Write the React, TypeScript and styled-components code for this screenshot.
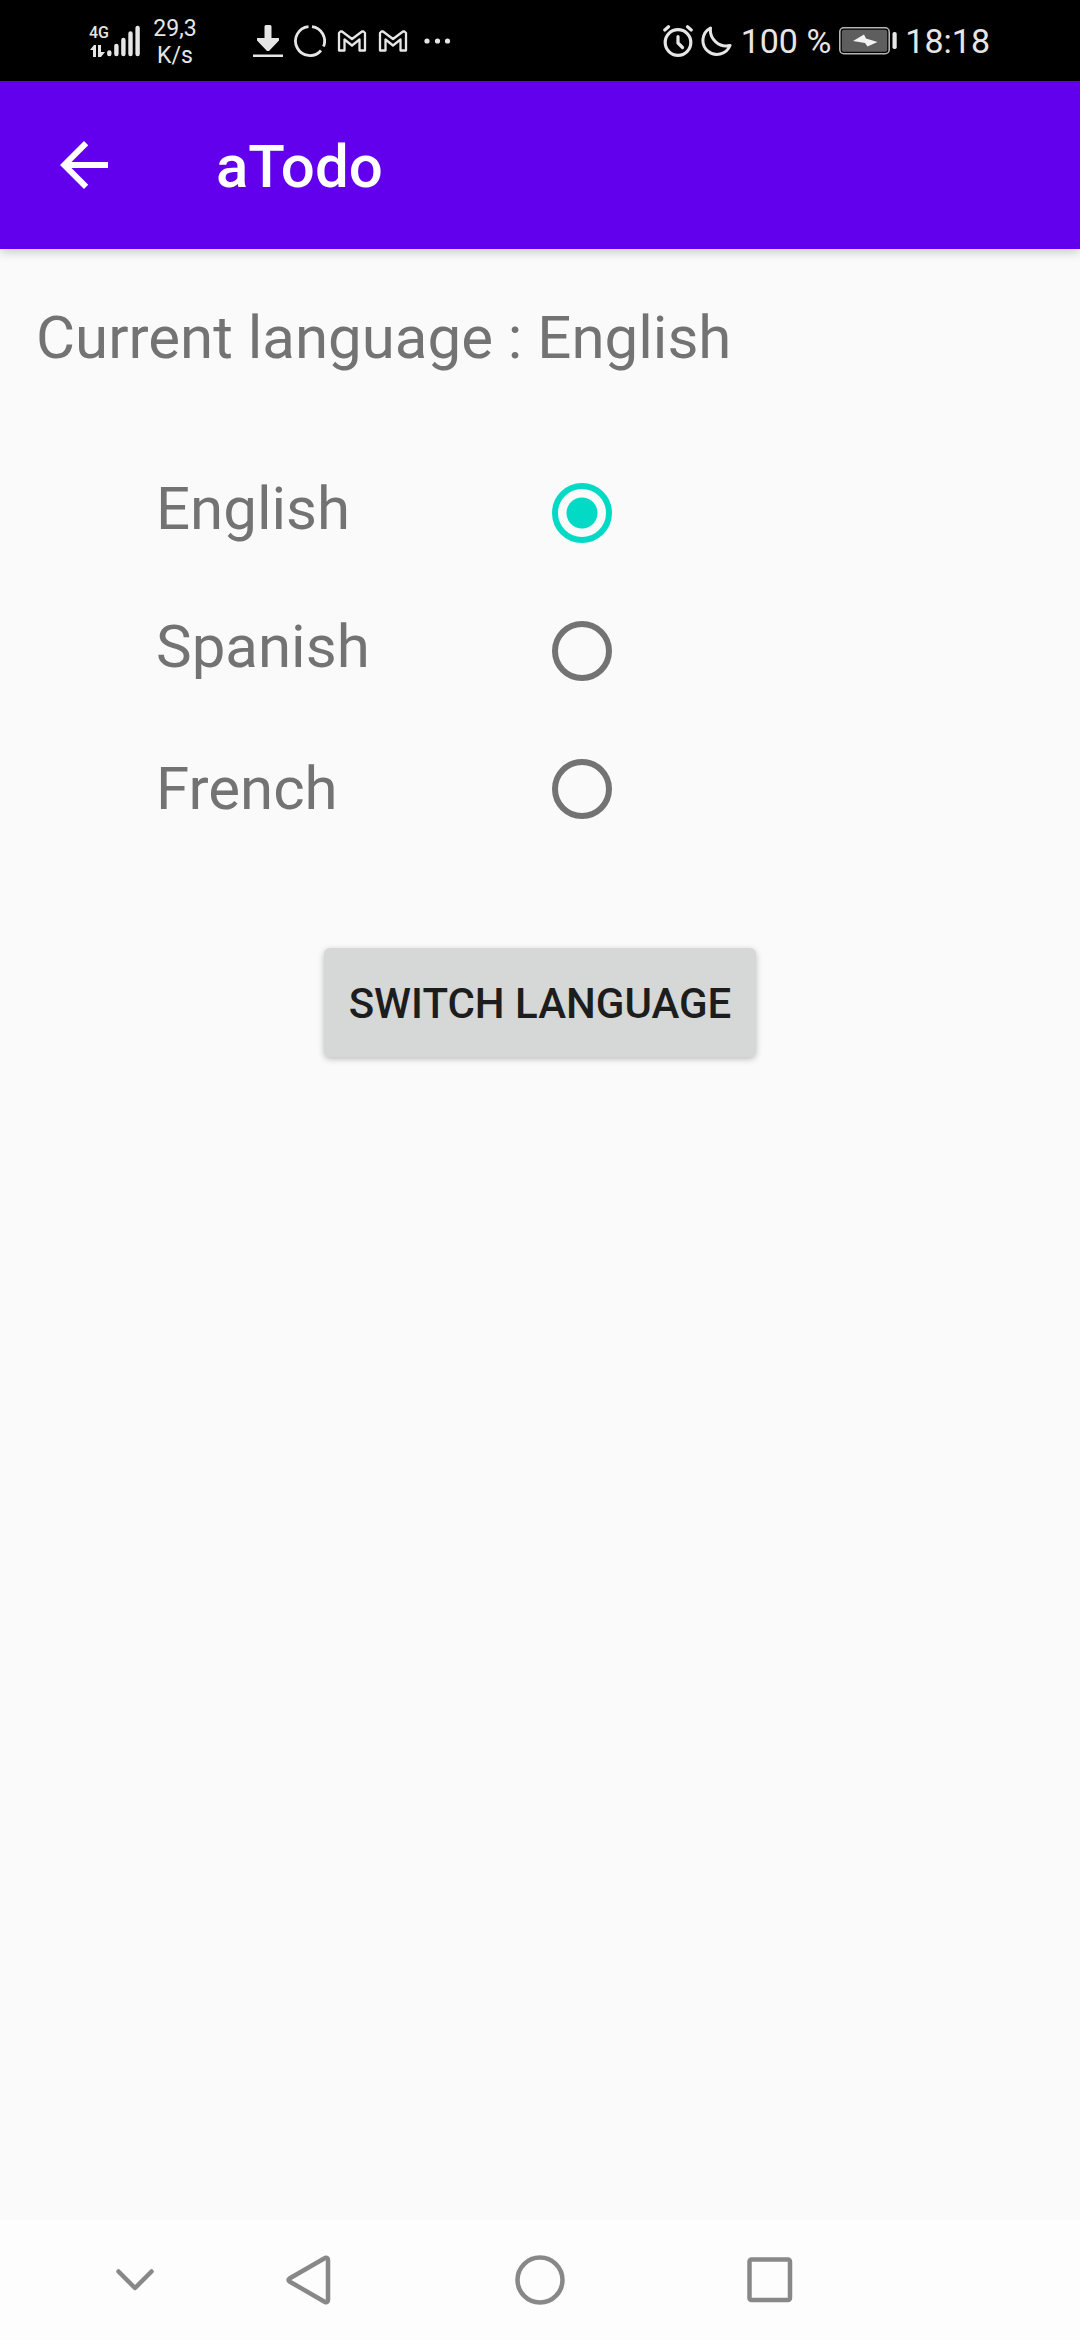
import React, { useState } from "react";
import styled, { createGlobalStyle } from "styled-components";

const GlobalStyle = createGlobalStyle`
  * { box-sizing: border-box; }
  body { margin: 0; background: #fafafa; }
  button, input { font: inherit; margin: 0; }
  svg { display: block; flex: none; }
`;

const Screen = styled.div`
  min-height: 100vh;
  display: flex;
  flex-direction: column;
  background: #fafafa;
  font-family: Roboto, "Noto Sans", sans-serif;
`;

const StatusBar = styled.div`
  height: 81px;
  padding: 0 90px 0 89px;
  display: flex;
  align-items: center;
  justify-content: space-between;
  background: #000;
  color: #e6e6e6;
`;

const StatusGroup = styled.div<{ $gap: number }>`
  display: flex;
  align-items: center;
  gap: ${(p) => p.$gap}px;
`;

const Network = styled.div`
  display: flex;
  align-items: flex-end;
`;

const NetworkType = styled.div`
  display: flex;
  flex-direction: column;
  gap: 4px;
  width: 18px;
  font-size: 16px;
  font-weight: 500;
  line-height: 16px;
`;

const Speed = styled.div`
  width: 68px;
  padding-top: 2px;
  font-size: 23px;
  line-height: 27px;
  text-align: center;
`;

const Notifications = styled.div`
  display: flex;
  align-items: center;
  gap: 11px;
  margin-left: 44px;
`;

const StatusText = styled.span`
  font-size: 34px;
  line-height: 40px;
  white-space: nowrap;
`;

const AppBar = styled.header`
  height: 168px;
  padding: 0 48px;
  display: flex;
  align-items: center;
  gap: 96px;
  background: #6200ee;
  color: #fff;
  box-shadow: 0 3px 10px rgba(0, 0, 0, 0.2);
`;

const IconButton = styled.button`
  padding: 0;
  border: 0;
  background: none;
  color: inherit;
`;

const Title = styled.h1`
  margin: 0;
  padding-top: 4px;
  font-size: 60px;
  font-weight: 500;
  line-height: 72px;
`;

const Content = styled.main`
  flex: 1;
  padding: 53px 36px;
  display: flex;
  flex-direction: column;
`;

const Current = styled.p`
  margin: 0;
  color: #737373;
  font-size: 60px;
  line-height: 72px;
`;

const Options = styled.div`
  display: flex;
  flex-direction: column;
  gap: 58px;
  padding: 99px 120px 0;
`;

const Option = styled.div`
  height: 80px;
  display: grid;
  grid-template-columns: 396px 60px;
  align-items: center;
`;

const OptionLabel = styled.label<{ $align: "start" | "center" }>`
  align-self: ${(p) => p.$align};
  color: #737373;
  font-size: 60px;
  line-height: 72px;
`;

const Radio = styled.input`
  appearance: none;
  width: 60px;
  height: 60px;
  border: 6px solid #737373;
  border-radius: 50%;
  &:checked {
    border-color: #03dac5;
    background: radial-gradient(circle, #03dac5 15px, transparent 16px);
  }
`;

const SwitchButton = styled.button`
  align-self: center;
  margin-top: 119px;
  padding: 31px 25px 28px;
  border: 0;
  border-radius: 6px;
  background: #d6d7d7;
  color: #1d1d1d;
  font-size: 42px;
  font-weight: 500;
  line-height: 50px;
  text-transform: uppercase;
  box-shadow: 0 2px 6px rgba(0, 0, 0, 0.25);
`;

const NavBar = styled.nav`
  height: 120px;
  display: grid;
  grid-template-columns: 195px 1fr 1fr 1fr 195px;
  background: #fdfdfd;
  color: #888;
`;

const NavButton = styled(IconButton)<{ $inset?: number }>`
  display: flex;
  align-items: center;
  justify-content: center;
  padding-left: ${(p) => p.$inset ?? 0}px;
`;

const DataArrows = () => (
  <svg width="18" height="12" viewBox="0 0 18 12" fill="currentColor">
    <path d="M1 5 L5 0 H7 V12 H4 V5Z M9 0 H12 V7 H16 L12 12 H9Z" />
  </svg>
);

const SignalBars = () => (
  <svg width="34" height="32" viewBox="0 0 34 32" stroke="currentColor" strokeWidth="4.4" strokeLinecap="round">
    <path d="M2.3 27.5V29 M9.4 21V29 M16.4 15V29 M23.5 8.5V29 M30.6 3V29" />
  </svg>
);

const Download = () => (
  <svg width="30" height="32" viewBox="0 0 30 32" fill="currentColor">
    <path d="M13 0h4a1.5 1.5 0 0 1 1.5 1.5V13h7.500v2.500L16 26h-2L4 15.500V13h7.500V1.500A1.500 1.500 0 0 1 13 0Z" />
    <rect y="29.500" width="30" height="2.500" />
  </svg>
);

const Ring = () => (
  <svg width="32" height="32" viewBox="0 0 32 32" fill="none" stroke="currentColor" strokeWidth="2.800">
    <path d="M18 1.600A14.500 14.500 0 0 1 29.500 21.500 M27 25.500A14.500 14.500 0 1 1 14.500 1.600" />
  </svg>
);

const Mail = () => (
  <svg width="30" height="22" viewBox="0 0 30 22" fill="none" stroke="currentColor" strokeWidth="2.300" strokeLinejoin="round">
    <path d="M3.500 1.500H5L15 9L25 1.500H26.500L28 3V20.500H22.500V9.500L15 15.500L7.500 9.500V20.500H2V3Z" />
  </svg>
);

const Dots = () => (
  <svg width="32" height="6" viewBox="-5 0 32 6" fill="currentColor">
    <circle cx="3" cy="3" r="2.600" />
    <circle cx="13.500" cy="3" r="2.600" />
    <circle cx="23.500" cy="3" r="2.600" />
  </svg>
);

const Alarm = () => (
  <svg width="30" height="32" viewBox="0 0 30 32" fill="none" stroke="currentColor" strokeWidth="3.200" strokeLinecap="round">
    <circle cx="15" cy="17.500" r="12.800" />
    <path d="M15 11.500V18L19.500 22.500" />
    <path d="M1.800 5L5.500 1.800M28.200 5L24.500 1.800" />
  </svg>
);

const Moon = () => (
  <svg width="32" height="32" viewBox="0 0 32 32" fill="none" stroke="currentColor" strokeWidth="3" strokeLinejoin="round">
    <path d="M9.500 3A14 14 0 1 0 29 20.500A16 16 0 0 1 9.500 3Z" />
  </svg>
);

const Battery = () => (
  <svg width="58" height="28" viewBox="0 0 58 28">
    <rect x="0.800" y="0.800" width="49.400" height="25.900" rx="4" fill="none" stroke="#b4b4b4" strokeWidth="1.600" />
    <rect x="2.800" y="2.800" width="45.400" height="21.900" rx="2" fill="#5e5e5e" />
    <path d="M14 14L25 7.500L27 11.500L38.500 15L28.500 19.500L26 16Z" fill="#f2f2f2" />
    <rect x="53.500" y="5" width="4.200" height="17" rx="1.800" fill="#e6e6e6" />
  </svg>
);

const BackArrow = () => (
  <svg width="72" height="72" viewBox="0 0 24 24" fill="currentColor">
    <path d="M20 11H7.830l5.590-5.590L12 4l-8 8 8 8 1.410-1.410L7.830 13H20v-2z" />
  </svg>
);

const NavIcon = ({ children }: { children: React.ReactNode }) => (
  <svg width="60" height="60" viewBox="0 0 60 60" fill="none" stroke="currentColor" strokeWidth="4.500" strokeLinecap="round" strokeLinejoin="round">
    {children}
  </svg>
);

const languages: { name: string; align: "start" | "center" }[] = [
  { name: "English", align: "start" },
  { name: "Spanish", align: "start" },
  { name: "French", align: "center" },
];

export default function App() {
  const [selected, setSelected] = useState("English");
  const [current, setCurrent] = useState("English");

  return (
    <Screen>
      <GlobalStyle />
      <StatusBar>
        <StatusGroup $gap={0}>
          <Network>
            <NetworkType>
              4G
              <DataArrows />
            </NetworkType>
            <SignalBars />
          </Network>
          <Speed>29,3 K/s</Speed>
          <Notifications>
            <Download />
            <Ring />
            <Mail />
            <Mail />
            <Dots />
          </Notifications>
        </StatusGroup>
        <StatusGroup $gap={8}>
          <Alarm />
          <Moon />
          <StatusText>100 %</StatusText>
          <Battery />
          <StatusText>18:18</StatusText>
        </StatusGroup>
      </StatusBar>
      <AppBar>
        <IconButton aria-label="Back">
          <BackArrow />
        </IconButton>
        <Title>aTodo</Title>
      </AppBar>
      <Content>
        <Current>Current language : {current}</Current>
        <Options role="radiogroup" aria-label="Language">
          {languages.map(({ name, align }) => (
            <Option key={name}>
              <OptionLabel htmlFor={name} $align={align}>
                {name}
              </OptionLabel>
              <Radio
                type="radio"
                id={name}
                name="language"
                checked={selected === name}
                onChange={() => setSelected(name)}
              />
            </Option>
          ))}
        </Options>
        <SwitchButton onClick={() => setCurrent(selected)}>Switch language</SwitchButton>
      </Content>
      <NavBar>
        <NavButton aria-label="Hide navigation" $inset={75}>
          <NavIcon>
            <path d="M13.500 21.500L30 38L46.500 21.500" />
          </NavIcon>
        </NavButton>
        <NavButton aria-label="Back">
          <NavIcon>
            <path d="M9.500 28.500Q7.500 30 9.500 31.500L45 52Q48 53 48 50V10Q48 7 45 8Z" />
          </NavIcon>
        </NavButton>
        <NavButton aria-label="Home">
          <NavIcon>
            <circle cx="30" cy="30" r="22.500" />
          </NavIcon>
        </NavButton>
        <NavButton aria-label="Recent apps">
          <NavIcon>
            <rect x="9.500" y="9.500" width="40.500" height="40.500" rx="2" />
          </NavIcon>
        </NavButton>
      </NavBar>
    </Screen>
  );
}
